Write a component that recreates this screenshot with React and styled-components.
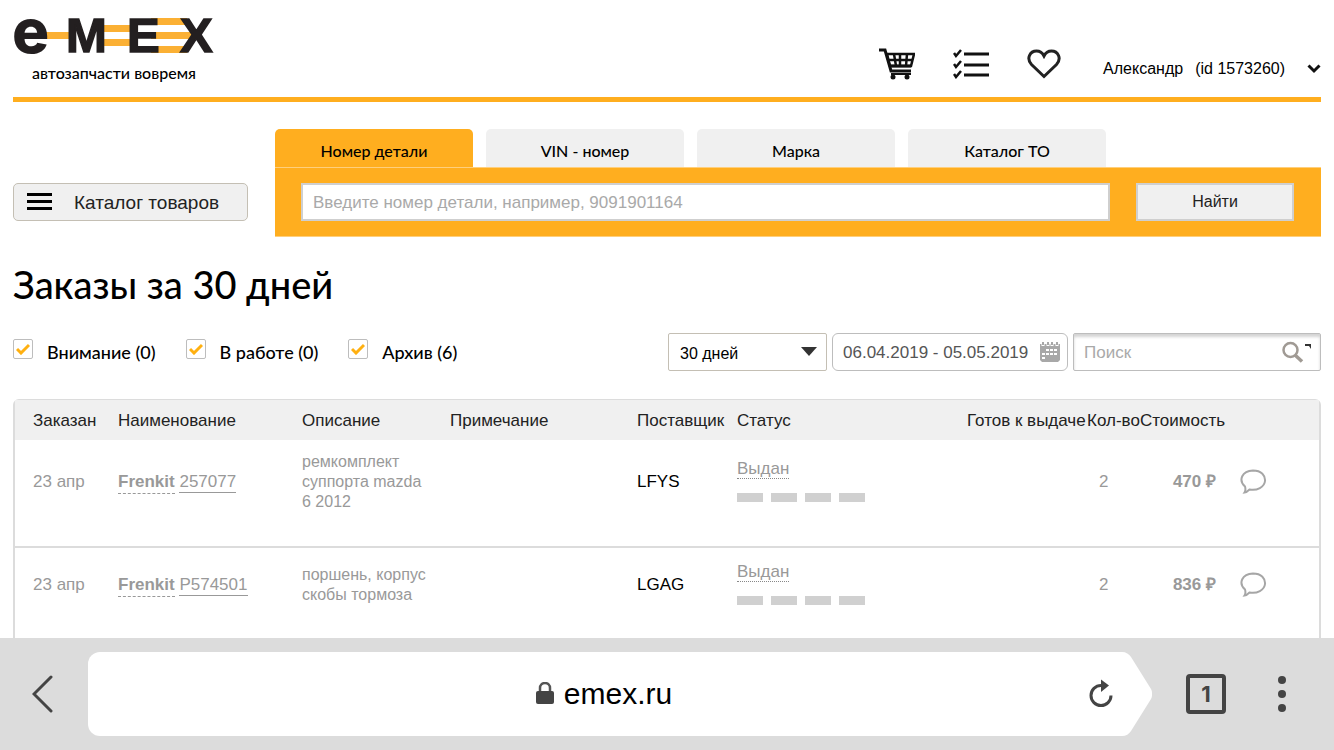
import React, { useState } from "react";
import styled, { createGlobalStyle } from "styled-components";

const GlobalStyle = createGlobalStyle`
  * {
    box-sizing: border-box;
  }

  body {
    margin: 0;
    background-color: white;
    font-family: "Liberation Sans", Arial, sans-serif;
    font-size: 17px;
    color: #000;
  }

  button,
  input,
  select {
    margin: 0;
    font-family: inherit;
    color: inherit;
  }

  button {
    cursor: pointer;
  }
`;

const humanist = `"Gill Sans", Lato, sans-serif`;
const orange = "#ffae1f";

const Screen = styled.div`
  display: flex;
  flex-direction: column;
  height: 100vh;
`;

const Page = styled.div`
  flex: 1;
  min-height: 0;
  padding: 0 13px;
  overflow: hidden auto;
  scrollbar-width: none;
`;

const Header = styled.header`
  display: flex;
  justify-content: space-between;
  align-items: flex-end;
  padding: 15px 0 12px;
  border-bottom: 5px solid ${orange};
`;

const LogoLink = styled.a`
  display: block;
  color: #000;
  text-decoration: none;

  svg {
    display: block;
    overflow: visible;
  }
`;

const Slogan = styled.span`
  display: block;
  padding-left: 19px;
  font-family: ${humanist};
  font-size: 16px;
  font-weight: 500;
  line-height: 24px;
`;

const HeaderNav = styled.nav`
  display: flex;
  align-items: center;
  gap: 38px;
  height: 32px;
  margin-bottom: 5px;
`;

const IconLink = styled.a`
  display: flex;
  color: #111;
`;

const UserButton = styled.button`
  display: flex;
  align-self: flex-end;
  align-items: center;
  gap: 12px;
  height: 24px;
  margin-left: 4px;
  padding: 2px 0 0;
  border: 0;
  background: none;
  font-size: 16px;

  svg {
    margin-left: 10px;
  }
`;

const SearchSection = styled.section`
  display: flex;
  align-items: flex-end;
  gap: 27px;
  margin-top: 27px;
`;

const CatalogButton = styled.button`
  display: flex;
  align-items: center;
  gap: 22px;
  width: 235px;
  height: 38px;
  margin-bottom: 16px;
  padding: 1px 12px 0;
  border: 1px solid #c4bfb4;
  border-radius: 5px;
  background-color: #f0f0f0;
  font-size: 19px;
  color: #222;
`;

const SearchBox = styled.div`
  flex: 1;
`;

const Tabs = styled.div`
  display: flex;
  gap: 13px;
`;

const Tab = styled.button`
  width: 198px;
  height: 38px;
  padding: 4px 0 0;
  border: 0;
  border-radius: 5px 5px 0 0;
  background-color: ${(props) => (props.$active ? orange : "#f0f0f0")};
  font-family: ${humanist};
  font-size: 16px;
  font-weight: 500;
`;

const SearchForm = styled.form`
  display: flex;
  gap: 26px;
  padding: 15px 27px 15px 26px;
  border-top: 1px solid #ffcf7c;
  border-bottom: 1px solid #ffcf7c;
  background-color: ${orange};
`;

const PartInput = styled.input`
  flex: 1;
  min-width: 0;
  height: 38px;
  padding: 2px 10px 0;
  border: 2px solid #cfcfcf;
  background-color: white;
  font-size: 17px;

  &::placeholder {
    color: #a9a9a9;
    opacity: 1;
  }
`;

const FindButton = styled.button`
  width: 158px;
  height: 38px;
  border: 2px solid #cfcfcf;
  background-color: #f0f0f0;
  font-size: 16px;
  color: #222;
`;

const Title = styled.h1`
  margin: 23px 0 24px;
  font-family: ${humanist};
  font-size: 38px;
  font-weight: 500;
  line-height: 48px;
`;

const Filters = styled.div`
  display: flex;
  justify-content: space-between;
  align-items: center;
  height: 39px;
`;

const Checks = styled.div`
  display: flex;
  gap: 30px;
`;

const CheckLabel = styled.label`
  display: flex;
  align-items: center;
  gap: 14px;
  font-family: ${humanist};
  font-size: 18px;
  font-weight: 500;
  line-height: 24px;
`;

const CheckBox = styled.span`
  display: grid;
  margin-bottom: 5px;

  input,
  svg {
    grid-area: 1 / 1;
    margin: 0;
  }

  input {
    appearance: none;
    width: 20px;
    height: 20px;
    border: 1px solid #bdbdbd;
    border-radius: 2px;
    background-color: white;
  }

  svg {
    place-self: center;
    pointer-events: none;
  }

  input:not(:checked) + svg {
    visibility: hidden;
  }
`;

const Fields = styled.div`
  display: flex;
  gap: 5px;
`;

const Field = styled.div`
  display: grid;
  align-items: center;
  width: ${(props) => props.$width}px;

  input,
  select,
  svg {
    grid-area: 1 / 1;
  }

  svg {
    justify-self: end;
    margin-right: ${(props) => props.$iconGap}px;
    pointer-events: none;
  }
`;

const PeriodSelect = styled.select`
  appearance: none;
  width: 100%;
  height: 38px;
  padding: 4px 11px 0;
  border: 1px solid #c4bfb4;
  border-radius: 2px;
  background-color: white;
  font-size: 16px;
`;

const DateInput = styled.input`
  width: 100%;
  height: 38px;
  padding: 3px 10px 0;
  border: 1px solid #bdbdbd;
  border-radius: 6px;
  background-color: white;
  font-size: 17px;
  color: #555;
`;

const FindInput = styled(DateInput)`
  border-radius: 2px;
  box-shadow: inset 0 3px 3px #d4d4d4;

  &::placeholder {
    color: #a9a9a9;
    opacity: 1;
  }
`;

const OrdersTable = styled.table`
  width: 100%;
  margin-top: 28px;
  border: 2px solid #dcdcdc;
  border-top-width: 1px;
  border-radius: 6px 6px 0 0;
  border-spacing: 0;
  table-layout: fixed;
  color: #999;
`;

const HeadCell = styled.th`
  width: ${(props) => (props.$width ? `${props.$width}px` : "auto")};
  height: 40px;
  padding: 2px 0 0;
  background-color: #f0f0f0;
  font-size: 17px;
  font-weight: 400;
  text-align: left;
  white-space: nowrap;
  color: #222;

  &:first-child {
    padding-left: 18px;
  }
`;

const Cell = styled.td`
  padding: 12px 0 34px;
  border-bottom: 2px solid #dcdcdc;
  font-size: 17px;
  line-height: 20px;

  &:first-child {
    padding-left: 18px;
  }
`;

const DescriptionCell = styled(Cell)`
  padding-right: 24px;
  font-size: 16px;
`;

const SupplierCell = styled(Cell)`
  color: #000;
`;

const CountCell = styled(Cell)`
  padding-left: 12px;
`;

const PriceCell = styled(Cell)`
  padding-right: 24px;
  font-weight: 700;
  text-align: right;
`;

const Brand = styled.a`
  padding-bottom: 2px;
  border-bottom: 1px dashed #999;
  font-weight: 700;
  text-decoration: none;
  color: inherit;
`;

const PartNumber = styled.a`
  padding-bottom: 1px;
  border-bottom: 1px solid #999;
  text-decoration: none;
  color: inherit;
`;

const Status = styled.div`
  height: 50px;
  padding-top: 2px;
`;

const StatusLink = styled.a`
  border-bottom: 1px dotted #888;
  text-decoration: none;
  color: inherit;
`;

const Steps = styled.div`
  display: flex;
  gap: 8px;
  padding-top: 14px;
`;

const Step = styled.span`
  width: 26px;
  height: 9px;
  background-color: #d0d0d0;
`;

const PlainButton = styled.button`
  display: flex;
  justify-content: center;
  align-items: center;
  padding: 0;
  border: 0;
  background: none;
`;

const BrowserBar = styled.footer`
  display: flex;
  align-items: center;
  height: 112px;
  background-color: #dcdcdc;
  color: #444;
`;

const BackButton = styled(PlainButton)`
  width: 88px;
  height: 84px;
`;

const Address = styled.div`
  flex: 1;
  display: grid;
  grid-template-columns: 1fr auto 1fr;
  align-items: center;
  height: 84px;
  border-radius: 12px 0 0 12px;
  background-color: white;
`;

const Url = styled.div`
  grid-column: 2;
  display: flex;
  align-items: center;
  gap: 10px;
  font-size: 30px;
  line-height: 32px;
  color: #000;
`;

const ReloadButton = styled(PlainButton)`
  justify-self: end;
  margin-right: 6px;
`;

const TabsButton = styled(PlainButton)`
  width: 40px;
  height: 40px;
  margin-left: 34px;
  border: 4px solid #444;
  border-radius: 4px;
  font-family: Inter, sans-serif;
  font-size: 22px;
  font-weight: 700;
  color: #444;
`;

const MenuButton = styled(PlainButton)`
  width: 40px;
  height: 40px;
  margin: 0 32px 0 36px;
`;

const Logo = () => (
  <svg width="202" height="46" viewBox="0 0 202 46" role="img" aria-label="emex">
    <g fill="#fbb034">
      <rect x="32" y="17" width="26" height="7" />
      <rect x="88" y="10" width="32" height="7" />
      <rect x="88" y="24" width="32" height="7" />
      <rect x="138" y="3" width="36" height="7" />
      <rect x="138" y="17" width="46" height="7" />
      <rect x="138" y="31" width="36" height="7" />
    </g>
    <g fill="#231f20" fontWeight="800">
      <text x="-1" y="38" fontSize="62" fontFamily="Inter, sans-serif">e</text>
      <g
        fontFamily="'Liberation Sans', Arial, sans-serif"
        fontSize="49"
        stroke="#231f20"
        strokeWidth="1.500"
      >
        <text x="53" y="37">M</text>
        <text x="114" y="37">E</text>
        <text x="167" y="37">X</text>
      </g>
    </g>
  </svg>
);

const CartIcon = () => (
  <svg width="36" height="32" viewBox="0 0 36 32" fill="none" stroke="currentColor">
    <path d="M0 2h6l6 21h20" strokeWidth="3" />
    <path d="M8 6h27l-3 12H11z" strokeWidth="2.500" />
    <path d="M9 12h25M15 6l2 12M21 6v12M28 6l-1 12" strokeWidth="2.500" />
    <path d="M11 18h21" strokeWidth="3" />
    <path d="M12 26h20" strokeWidth="2" />
    <circle cx="14" cy="29" r="2.500" fill="currentColor" stroke="none" />
    <circle cx="28" cy="29" r="2.500" fill="currentColor" stroke="none" />
  </svg>
);

const ListIcon = () => (
  <svg width="36" height="30" viewBox="0 0 36 30" fill="none" stroke="currentColor">
    <path d="M11 5h25M11 16h25M11 26h25" strokeWidth="3" />
    <path d="M1 4l2 3 5-6M1 15l2 3 5-6M1 25l2 3 5-6" strokeWidth="2.500" />
  </svg>
);

const HeartIcon = () => (
  <svg width="34" height="30" viewBox="0 0 34 30" fill="none" stroke="#222" strokeWidth="3">
    <path d="M17 27.500L4.500 15.500C-1 9.500 3 2 9.500 2 13 2 15.500 4 17 7 18.500 4 21 2 24.500 2 31 2 35 9.500 29.500 15.500z" />
  </svg>
);

const CommentIcon = () => (
  <svg width="27" height="26" viewBox="0 0 27 26" fill="none" stroke="#a6a6a6" strokeWidth="2">
    <path d="M5 17.500C-2 11 2 2 13 1.500 21.500 1.500 25.500 6.500 25 12 24.500 18 17 22 9.500 20.500 8 22 6.500 23.300 4.500 23.500 5.500 22 5.700 20 5 17.500z" />
  </svg>
);

const CalendarIcon = () => (
  <svg width="20" height="20" viewBox="0 0 20 20">
    <path d="M0 2h20v16l-2 2H2l-2-2z" fill="#a8a8a8" />
    <path d="M3 0v4M8 0v4M12 0v4M17 0v4" stroke="white" strokeWidth="3" />
    <path d="M3 0v3M8 0v3M12 0v3M17 0v3" stroke="#a8a8a8" strokeWidth="2" />
    <path
      d="M6 7h3v2H6zM10 7h3v2h-3zM14 7h3v2h-3zM2 11h3v2H2zM6 11h3v2H6zM10 11h3v2h-3zM14 11h3v2h-3zM2 15h3v2H2z"
      fill="white"
    />
  </svg>
);

const tabs = ["Номер детали", "VIN - номер", "Марка", "Каталог ТО"];

const checks = ["Внимание (0)", "В работе (0)", "Архив (6)"];

const columns = [
  { title: "Заказан", width: 103 },
  { title: "Наименование", width: 184 },
  { title: "Описание", width: 148 },
  { title: "Примечание", width: 187 },
  { title: "Поставщик", width: 100 },
  { title: "Статус" },
  { title: "Готов к выдаче", width: 120 },
  { title: "Кол-во", width: 53 },
  { title: "Стоимость", width: 100 },
  { title: "", width: 79 },
];

const orders = [
  {
    date: "23 апр",
    brand: "Frenkit",
    number: "257077",
    description: "ремкомплект суппорта mazda 6 2012",
    supplier: "LFYS",
    count: 2,
    price: 470,
  },
  {
    date: "23 апр",
    brand: "Frenkit",
    number: "P574501",
    description: "поршень, корпус скобы тормоза",
    supplier: "LGAG",
    count: 2,
    price: 836,
  },
];

const OrderRow = ({ order }) => (
  <tr>
    <Cell>{order.date}</Cell>
    <Cell>
      <Brand href="#brand">{order.brand}</Brand>{" "}
      <PartNumber href="#part">{order.number}</PartNumber>
    </Cell>
    <DescriptionCell>{order.description}</DescriptionCell>
    <Cell />
    <SupplierCell>{order.supplier}</SupplierCell>
    <Cell>
      <Status>
        <StatusLink href="#status">Выдан</StatusLink>
        <Steps>
          <Step />
          <Step />
          <Step />
          <Step />
        </Steps>
      </Status>
    </Cell>
    <Cell />
    <CountCell>{order.count}</CountCell>
    <PriceCell>{order.price} ₽</PriceCell>
    <Cell>
      <PlainButton aria-label="Комментарий">
        <CommentIcon />
      </PlainButton>
    </Cell>
  </tr>
);

const App = () => {
  const [activeTab, setActiveTab] = useState(tabs[0]);

  return (
    <Screen>
      <GlobalStyle />
      <Page>
        <Header>
          <LogoLink href="#home">
            <Logo />
            <Slogan>автозапчасти вовремя</Slogan>
          </LogoLink>
          <HeaderNav>
            <IconLink href="#cart" aria-label="Корзина">
              <CartIcon />
            </IconLink>
            <IconLink href="#orders" aria-label="Заказы">
              <ListIcon />
            </IconLink>
            <IconLink href="#favorites" aria-label="Избранное">
              <HeartIcon />
            </IconLink>
            <UserButton>
              <span>Александр</span>
              <span>(id 1573260)</span>
              <svg width="14" height="10" viewBox="0 0 14 10" fill="none">
                <path d="M1.500 1.500L7 7l5.500-5.500" stroke="#111" strokeWidth="3" />
              </svg>
            </UserButton>
          </HeaderNav>
        </Header>

        <SearchSection>
          <CatalogButton>
            <svg width="26" height="20" viewBox="0 0 26 20" stroke="#000" strokeWidth="3">
              <path d="M1 1.500h25M1 8.500h25M1 15.500h25" />
            </svg>
            Каталог товаров
          </CatalogButton>
          <SearchBox>
            <Tabs>
              {tabs.map((tab) => (
                <Tab key={tab} $active={tab === activeTab} onClick={() => setActiveTab(tab)}>
                  {tab}
                </Tab>
              ))}
            </Tabs>
            <SearchForm onSubmit={(e) => e.preventDefault()}>
              <PartInput
                aria-label="Номер детали"
                placeholder="Введите номер детали, например, 9091901164"
              />
              <FindButton>Найти</FindButton>
            </SearchForm>
          </SearchBox>
        </SearchSection>

        <Title>Заказы за 30 дней</Title>

        <Filters>
          <Checks>
            {checks.map((check) => (
              <CheckLabel key={check}>
                <CheckBox>
                  <input type="checkbox" defaultChecked />
                  <svg width="14" height="12" viewBox="0 0 14 12" fill="none">
                    <path d="M1 6l4 4 8-8" stroke="#ffb010" strokeWidth="3" />
                  </svg>
                </CheckBox>
                {check}
              </CheckLabel>
            ))}
          </Checks>
          <Fields>
            <Field $width={159} $iconGap={10}>
              <PeriodSelect aria-label="Период">
                <option>30 дней</option>
              </PeriodSelect>
              <svg width="16" height="9" viewBox="0 0 16 9">
                <path d="M0 0h16L8 9z" fill="#333" />
              </svg>
            </Field>
            <Field $width={236} $iconGap={8}>
              <DateInput aria-label="Даты" defaultValue="06.04.2019 - 05.05.2019" />
              <CalendarIcon />
            </Field>
            <Field $width={248} $iconGap={10}>
              <FindInput aria-label="Поиск" placeholder="Поиск" />
              <svg width="29" height="22" viewBox="0 0 29 22" fill="none">
                <circle cx="8.500" cy="9" r="7" stroke="#a09a94" strokeWidth="2.500" />
                <path d="M13 14l7 6.500" stroke="#a09a94" strokeWidth="3.500" />
                <path d="M23 3h6v5l-2-3h-4z" fill="#333" />
              </svg>
            </Field>
          </Fields>
        </Filters>

        <OrdersTable>
          <thead>
            <tr>
              {columns.map((column) => (
                <HeadCell key={column.title} $width={column.width}>
                  {column.title}
                </HeadCell>
              ))}
            </tr>
          </thead>
          <tbody>
            {orders.map((order) => (
              <OrderRow key={order.number} order={order} />
            ))}
          </tbody>
        </OrdersTable>
      </Page>

      <BrowserBar>
        <BackButton aria-label="Назад">
          <svg width="24" height="40" viewBox="0 0 24 40" fill="none">
            <path d="M19 3L2 20l17 17" stroke="#444" strokeWidth="3" strokeLinecap="round" />
          </svg>
        </BackButton>
        <Address>
          <Url>
            <svg width="18" height="24" viewBox="0 0 18 24">
              <path d="M4 10V6a5 5 0 0110 0v4" fill="none" stroke="#555" strokeWidth="2.500" />
              <rect y="9" width="18" height="13" rx="2" fill="#444" />
            </svg>
            emex.ru
          </Url>
          <ReloadButton aria-label="Обновить">
            <svg width="26" height="30" viewBox="0 0 26 30">
              <path
                d="M13 6.500a10 10 0 1010 10"
                fill="none"
                stroke="#444"
                strokeWidth="3"
              />
              <path d="M13 0.500l8 6-8 6.500z" fill="#444" />
            </svg>
          </ReloadButton>
        </Address>
        <svg width="32" height="84" viewBox="0 0 32 84">
          <path
            d="M0 0h2c4 0 7 2 9 5l20 32c1.500 3 1.500 7 0 10L11 79c-2 3-5 5-9 5H0z"
            fill="white"
          />
        </svg>
        <TabsButton aria-label="Вкладки">1</TabsButton>
        <MenuButton aria-label="Меню">
          <svg width="8" height="36" viewBox="0 0 8 36" fill="#444">
            <circle cx="4" cy="4" r="4" />
            <circle cx="4" cy="18" r="4" />
            <circle cx="4" cy="32" r="4" />
          </svg>
        </MenuButton>
      </BrowserBar>
    </Screen>
  );
};

export default App;
